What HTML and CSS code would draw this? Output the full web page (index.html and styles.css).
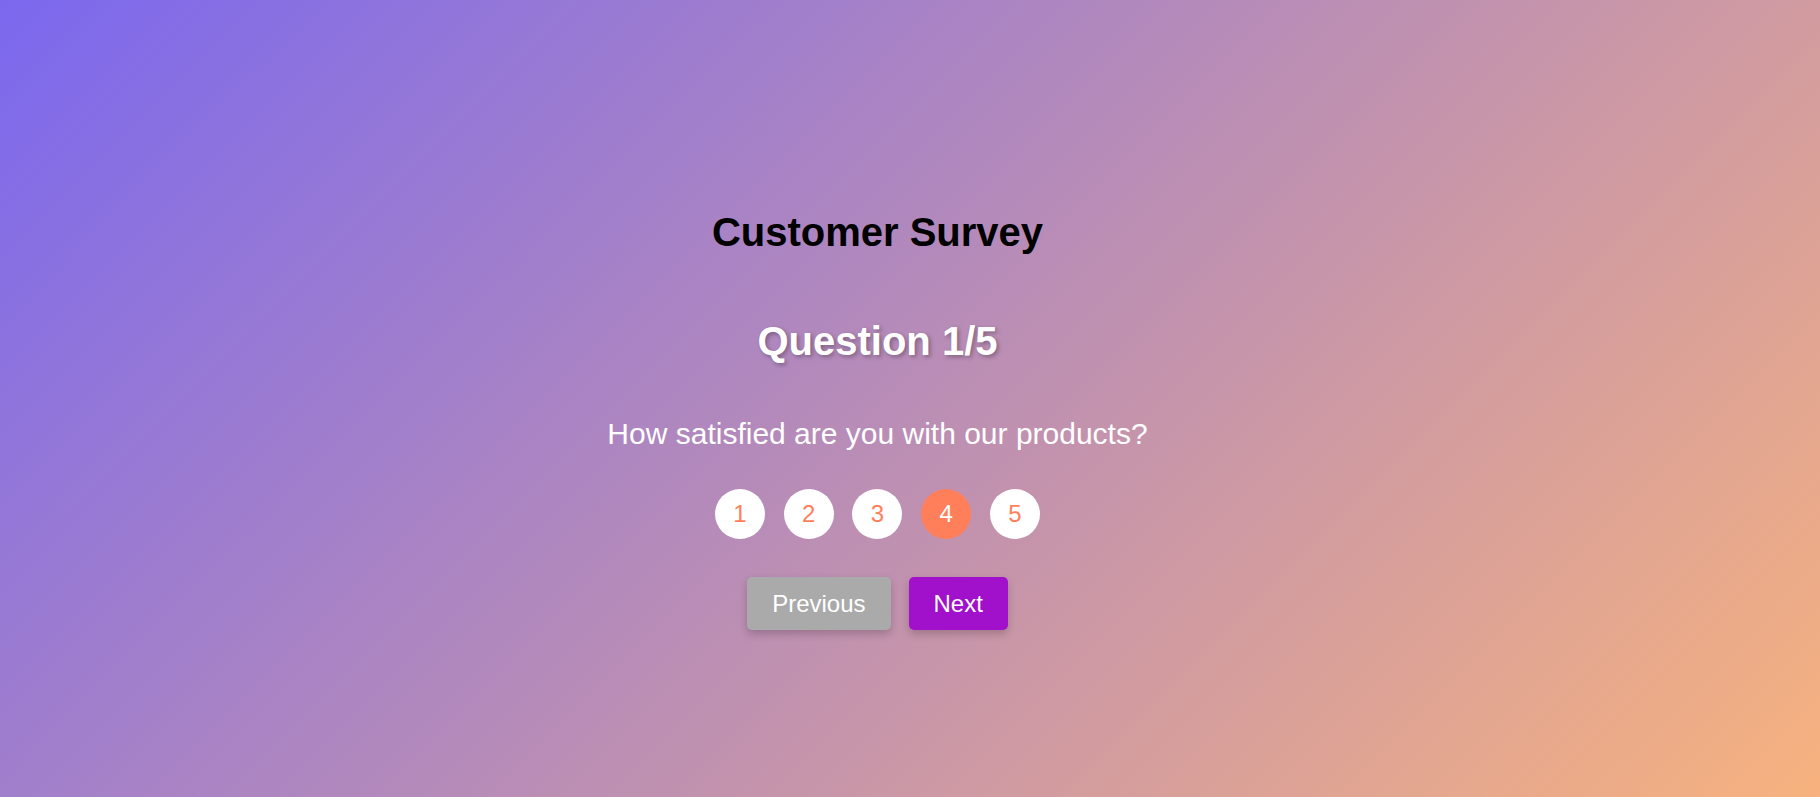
FILE: index.html
```html
<!DOCTYPE html>
<html lang="en">
<head>
<meta charset="utf-8">
<title>Customer Survey</title>
<link rel="stylesheet" href="styles.css">
</head>
<body>
<main class="page">
  <section class="survey">
    <h1 class="survey-title">Customer Survey</h1>
    <h2 class="question-count">Question 1/5</h2>
    <p class="question-text">How satisfied are you with our products?</p>
    <div class="rating">
      <button class="rating-option">1</button>
      <button class="rating-option">2</button>
      <button class="rating-option">3</button>
      <button class="rating-option is-selected">4</button>
      <button class="rating-option">5</button>
    </div>
    <div class="nav">
      <button class="nav-btn nav-prev">Previous</button>
      <button class="nav-btn nav-next">Next</button>
    </div>
  </section>
</main>
</body>
</html>
```
FILE: styles.css
```css
html, body {
  margin: 0;
  padding: 0;
  height: 100%;
}

body {
  font-family: "Liberation Sans", Arial, sans-serif;
  background: linear-gradient(135deg, #7b68ee 0%, #f7b27e 100%);
  overflow: hidden;
}

.page {
  height: 100%;
  box-sizing: border-box;
  padding-top: 209px;
  padding-right: 65px;
  display: flex;
  justify-content: center;
  align-items: flex-start;
}

.survey {
  display: flex;
  flex-direction: column;
  align-items: center;
  text-align: center;
}

.survey-title {
  margin: 0;
  font-size: 40px;
  font-weight: bold;
  color: #000;
  line-height: 46px;
}

.question-count {
  margin: 63px 0 0;
  font-size: 40px;
  font-weight: bold;
  color: #fff;
  line-height: 46px;
  text-shadow: 2px 2px 4px rgba(0, 0, 0, 0.3);
}

.question-text {
  margin: 53px 0 0;
  font-size: 30px;
  color: #fff;
  line-height: 34px;
}

.rating {
  margin-top: 38px;
  display: flex;
  gap: 18.75px;
}

.rating-option {
  width: 50px;
  height: 50px;
  border: none;
  border-radius: 50%;
  background: #fff;
  color: #ff7f5a;
  font-family: inherit;
  font-size: 24px;
  padding: 0;
  display: flex;
  align-items: center;
  justify-content: center;
}

.rating-option.is-selected {
  background: #ff7f5a;
  color: #fff;
}

.nav {
  margin-top: 38px;
  display: flex;
  gap: 18px;
}

.nav-btn {
  height: 53px;
  padding: 0 25px;
  border: none;
  border-radius: 5px;
  font-family: inherit;
  font-size: 24px;
  color: #fff;
  box-shadow: 0 4px 8px rgba(0, 0, 0, 0.2);
}

.nav-prev {
  background: #aaaaaa;
}

.nav-next {
  background: #a110cb;
}
```
